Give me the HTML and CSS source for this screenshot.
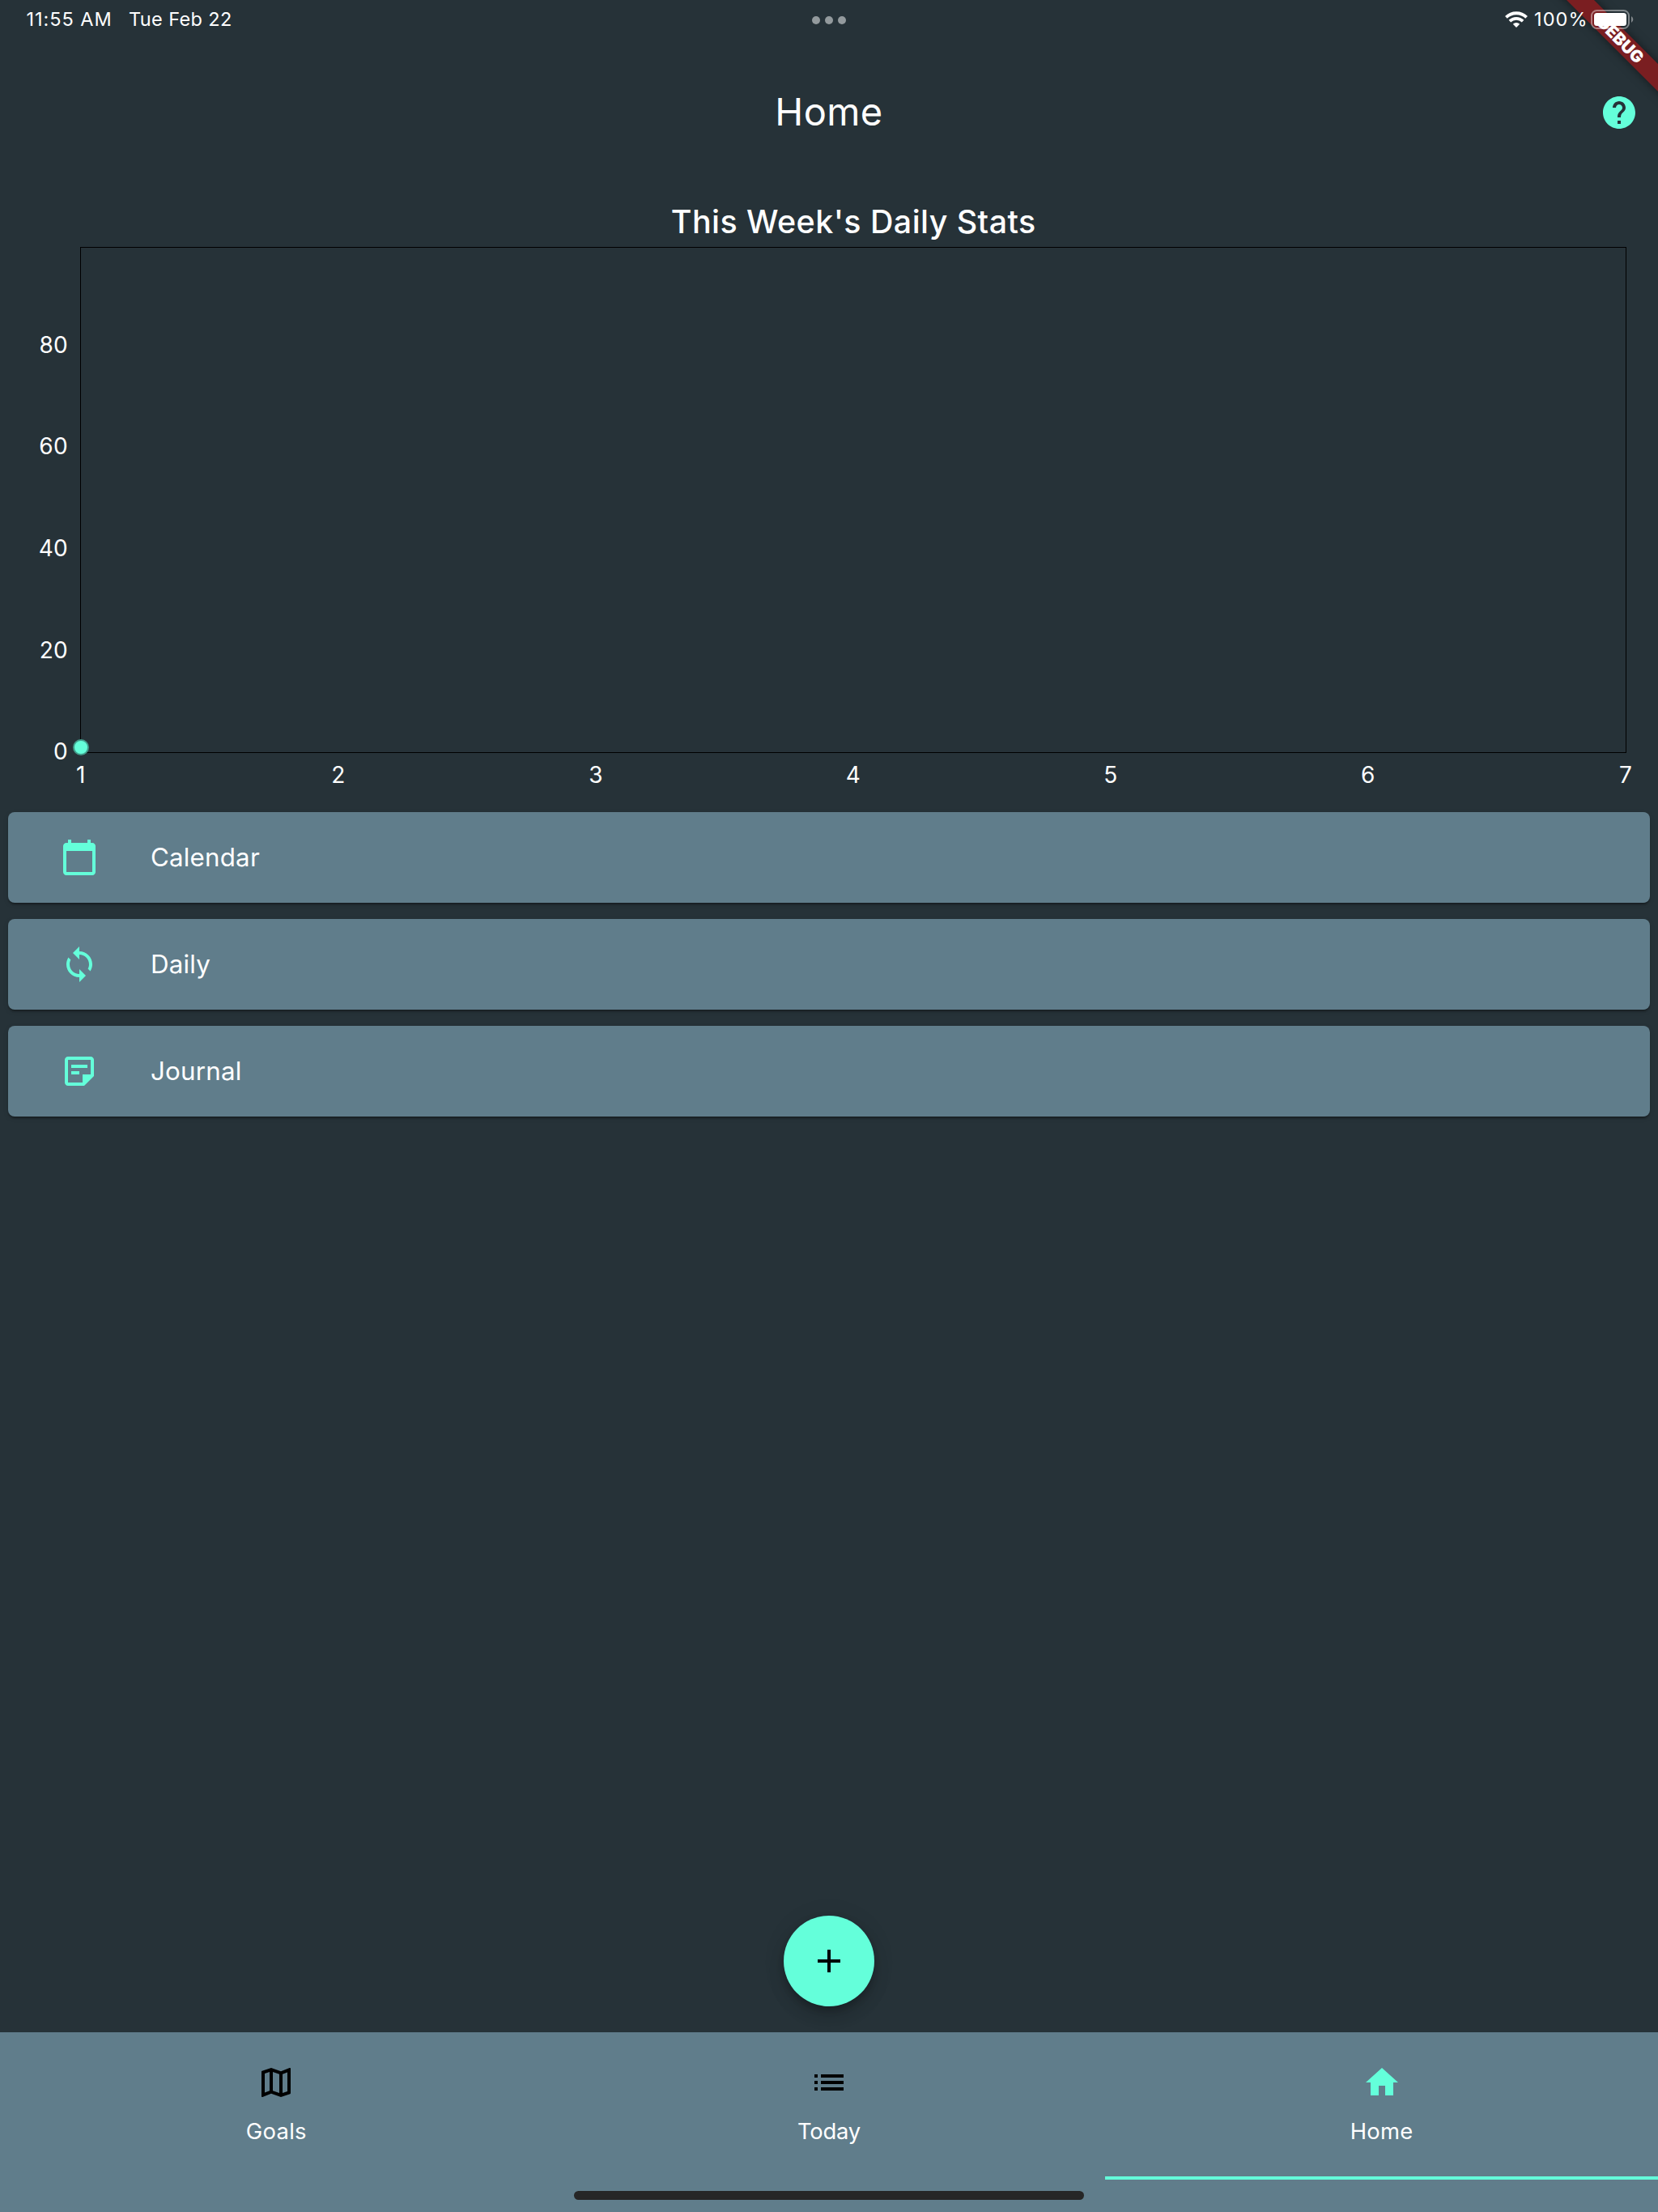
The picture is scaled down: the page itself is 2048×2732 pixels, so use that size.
FILE: index.html
```html
<!DOCTYPE html>
<html lang="en">
<head>
<meta charset="utf-8">
<title>Home</title>
<link rel="stylesheet" href="styles.css">
</head>
<body>
<div class="screen">
  <div class="status-bar">
    <div class="status-left">
      <span class="status-time">11:55 AM</span>
      <span class="status-date">Tue Feb 22</span>
    </div>
    <div class="multitask"><i></i><i></i><i></i></div>
    <div class="status-right">
      <svg class="wifi" viewBox="0 0 28 20" width="28" height="20">
        <path d="M1.4 7.4a18 18 0 0 1 25.2 0" fill="none" stroke="#fff" stroke-width="3.8"/>
        <path d="M5.9 12.1a11.6 11.6 0 0 1 16.2 0" fill="none" stroke="#fff" stroke-width="3.7"/>
        <path d="M14 20l-4.2-4.3a6 6 0 0 1 8.4 0z" fill="#fff"/>
      </svg>
      <span class="percent">100%</span>
      <svg class="battery" viewBox="0 0 54 24" width="54" height="24">
        <rect x="1" y="1" width="46" height="22" rx="6.5" fill="none" stroke="#fff" stroke-opacity=".42" stroke-width="2"/>
        <rect x="4" y="4" width="40" height="16" rx="3.5" fill="#fff"/>
        <path d="M50 8a4.6 4.6 0 0 1 0 8z" fill="#fff" fill-opacity=".42"/>
      </svg>
    </div>
  </div>
  <div class="debug-banner"><span>DEBUG</span></div>

  <header class="app-bar">
    <h1>Home</h1>
    <svg class="icon help" viewBox="0 0 24 24"><path d="M12 2C6.48 2 2 6.48 2 12s4.48 10 10 10 10-4.48 10-10S17.52 2 12 2zm1 17h-2v-2h2v2zm2.07-7.75l-.9.92C13.45 12.9 13 13.5 13 15h-2v-.5c0-1.1.45-2.1 1.17-2.83l1.24-1.26c.37-.36.59-.86.59-1.41 0-1.1-.9-2-2-2s-2 .9-2 2H8c0-2.21 1.79-4 4-4s4 1.79 4 4c0 .88-.36 1.68-.93 2.25z"/></svg>
  </header>

  <svg class="chart" viewBox="0 231 2048 772" width="2048" height="772">
    <text class="chart-title" x="1054.2" y="288" text-anchor="middle">This Week's Daily Stats</text>
    <rect x="99.5" y="305.5" width="1909" height="624" fill="none" stroke="#000"/>
    <g class="axis" text-anchor="end">
      <text x="84.2" y="435.5">80</text>
      <text x="84.2" y="561.3">60</text>
      <text x="84.2" y="687">40</text>
      <text x="84.2" y="812.5">20</text>
      <text x="84.2" y="938.2">0</text>
    </g>
    <g class="axis" text-anchor="middle">
      <text x="100" y="967.3">1</text>
      <text x="418" y="967.3">2</text>
      <text x="736" y="967.3">3</text>
      <text x="1054" y="967.3">4</text>
      <text x="1372" y="967.3">5</text>
      <text x="1690" y="967.3">6</text>
      <text x="2008" y="967.3">7</text>
    </g>
    <circle cx="100" cy="923" r="9" fill="#64ffda" stroke="#429d8b" stroke-width="2"/>
  </svg>

  <main class="menu">
    <div class="card">
      <svg class="icon" viewBox="0 0 24 24"><path d="M20 3h-1V1h-2v2H7V1H5v2H4c-1.1 0-2 .9-2 2v16c0 1.1.9 2 2 2h16c1.1 0 2-.9 2-2V5c0-1.1-.9-2-2-2zm0 18H4V8h16v13z"/></svg>
      <span>Calendar</span>
    </div>
    <div class="card">
      <svg class="icon" viewBox="0 0 24 24"><path d="M12 4V1L8 5l4 4V6c3.31 0 6 2.69 6 6 0 1.01-.25 1.97-.7 2.8l1.46 1.46C19.54 15.03 20 13.57 20 12c0-4.42-3.58-8-8-8zm0 14c-3.31 0-6-2.69-6-6 0-1.01.25-1.97.7-2.8L5.24 7.74C4.46 8.97 4 10.43 4 12c0 4.42 3.58 8 8 8v3l4-4-4-4v3z"/></svg>
      <span>Daily</span>
    </div>
    <div class="card">
      <svg class="icon" viewBox="0 0 24 24"><path d="M19 5v9h-5v5H5V5h14m0-2H5c-1.1 0-2 .9-2 2v14c0 1.1.9 2 2 2h10l6-6V5c0-1.1-.9-2-2-2zm-7 11H7v-2h5v2zm5-4H7V8h10v2z"/></svg>
      <span>Journal</span>
    </div>
  </main>

  <div class="fab">
    <svg class="icon" viewBox="0 0 24 24"><path d="M19 13h-6v6h-2v-6H5v-2h6V5h2v6h6v2z"/></svg>
  </div>

  <nav class="tabs">
    <div class="tab">
      <svg class="icon" viewBox="0 0 24 24"><path d="M20.5 3l-.16.03L15 5.1 9 3 3.36 4.9c-.21.07-.36.25-.36.48V20.5c0 .28.22.5.5.5l.16-.03L9 18.9l6 2.1 5.64-1.9c.21-.07.36-.25.36-.48V3.5c0-.28-.22-.5-.5-.5zM10 5.47l4 1.4v11.66l-4-1.4V5.47zm-5 .99l3-1.01v11.7l-3 1.16V6.46zm14 11.08l-3 1.01V6.86l3-1.16v11.84z"/></svg>
      <span>Goals</span>
    </div>
    <div class="tab today">
      <svg class="icon" viewBox="0 0 24 24"><path d="M3 9h2V7H3v2zm0 4h2v-2H3v2zm0 4h2v-2H3v2zm4-8h14V7H7v2zm0 4h14v-2H7v2zm0 4h14v-2H7v2z"/></svg>
      <span>Today</span>
    </div>
    <div class="tab active">
      <svg class="icon" viewBox="0 0 24 24"><path d="M10 20v-6h4v6h5v-8h3L12 3 2 12h3v8z"/></svg>
      <span>Home</span>
    </div>
    <div class="home-indicator"></div>
  </nav>
</div>
</body>
</html>
```
FILE: styles.css
```css
* {
  box-sizing: border-box;
}

body {
  margin: 0;
  background: #263238;
  color: #fff;
  font-family: Inter, "Liberation Sans", sans-serif;
}

.screen {
  position: relative;
  display: flex;
  flex-direction: column;
  width: 2048px;
  height: 2732px;
  overflow: hidden;
}

.icon {
  display: block;
  width: 48px;
  height: 48px;
  fill: #64ffda;
}

/* Status bar */
.status-bar {
  position: relative;
  z-index: 2;
  display: grid;
  grid-template-columns: 1fr auto 1fr;
  align-items: center;
  height: 47px;
  padding: 0 30px 0 32px;
  font-size: 23.5px;
  line-height: 47px;
  white-space: nowrap;
}

.status-left {
  display: flex;
}

.status-time {
  width: 127px;
  padding-left: 0.5px;
  letter-spacing: 0.95px;
}

.status-date {
  letter-spacing: 0.38px;
}

.multitask {
  display: flex;
  gap: 6px;
  padding: 3px 2px 0 0;
}

.multitask i {
  width: 10px;
  height: 10px;
  border-radius: 50%;
  background: #939a9d;
}

.status-right {
  display: flex;
  align-items: center;
  justify-content: flex-end;
}

.wifi {
  margin-right: 8px;
}

.percent {
  width: 70px;
  letter-spacing: 1.1px;
}

.battery {
  margin-right: -1px;
}

/* Corner ribbon */
.debug-banner {
  position: absolute;
  z-index: 1;
  top: 36px;
  left: 1900px;
  width: 200px;
  height: 24px;
  padding-left: 4px;
  background: #7a1e21;
  box-shadow: 0 0 12px rgba(0, 0, 0, 0.5);
  transform: rotate(45deg);
  font-size: 20.6px;
  font-weight: 900;
  line-height: 24px;
  text-align: center;
}

/* App bar */
.app-bar {
  display: grid;
  grid-template-columns: 1fr auto 1fr;
  align-items: center;
  height: 184px;
  padding: 0 24px;
}

.app-bar h1 {
  grid-column: 2;
  margin: 0;
  padding-bottom: 2px;
  font-size: 47px;
  font-weight: 400;
  line-height: 56px;
  letter-spacing: 0.4px;
}

.help {
  justify-self: end;
}

/* Chart */
.chart {
  display: block;
  fill: #fff;
}

.chart-title {
  font-size: 39.4px;
  font-weight: 500;
  letter-spacing: 0.45px;
}

.axis {
  font-size: 28px;
  letter-spacing: 0.4px;
}

/* Menu cards */
.menu {
  display: flex;
  flex-direction: column;
  gap: 20px;
  padding: 0 10px;
}

.card {
  display: flex;
  align-items: center;
  gap: 64px;
  height: 112px;
  padding-left: 64px;
  border-radius: 8px;
  background: #607d8b;
  box-shadow: 0 4px 2px -2px rgba(0, 0, 0, 0.2), 0 2px 2px rgba(0, 0, 0, 0.14), 0 2px 6px rgba(0, 0, 0, 0.12);
  font-size: 31.3px;
  line-height: 38px;
  letter-spacing: 0.2px;
}

/* Add button */
.fab {
  display: flex;
  align-items: center;
  justify-content: center;
  align-self: center;
  width: 112px;
  height: 112px;
  margin: auto 0 32px;
  border-radius: 50%;
  background: #64ffda;
  box-shadow: 0 6px 10px -2px rgba(0, 0, 0, 0.2), 0 12px 20px rgba(0, 0, 0, 0.14), 0 2px 30px rgba(0, 0, 0, 0.08);
}

.fab .icon {
  fill: #000;
}

/* Bottom tabs */
.tabs {
  position: relative;
  display: grid;
  grid-template-columns: repeat(3, 1fr);
  height: 222px;
  background: #607d8b;
}

.tab {
  display: flex;
  flex-direction: column;
  align-items: center;
  gap: 16px;
  height: 182px;
  padding-top: 38px;
  font-size: 27.4px;
  line-height: 40px;
  letter-spacing: 0.3px;
}

.tab .icon {
  fill: #000;
}

.today {
  letter-spacing: -0.2px;
}

.tab.active {
  border-bottom: 4px solid #64ffda;
}

.tab.active .icon {
  fill: #64ffda;
}

.home-indicator {
  position: absolute;
  bottom: 15px;
  left: 709px;
  width: 630px;
  height: 11px;
  border-radius: 6px;
  background: #262626;
}
```
